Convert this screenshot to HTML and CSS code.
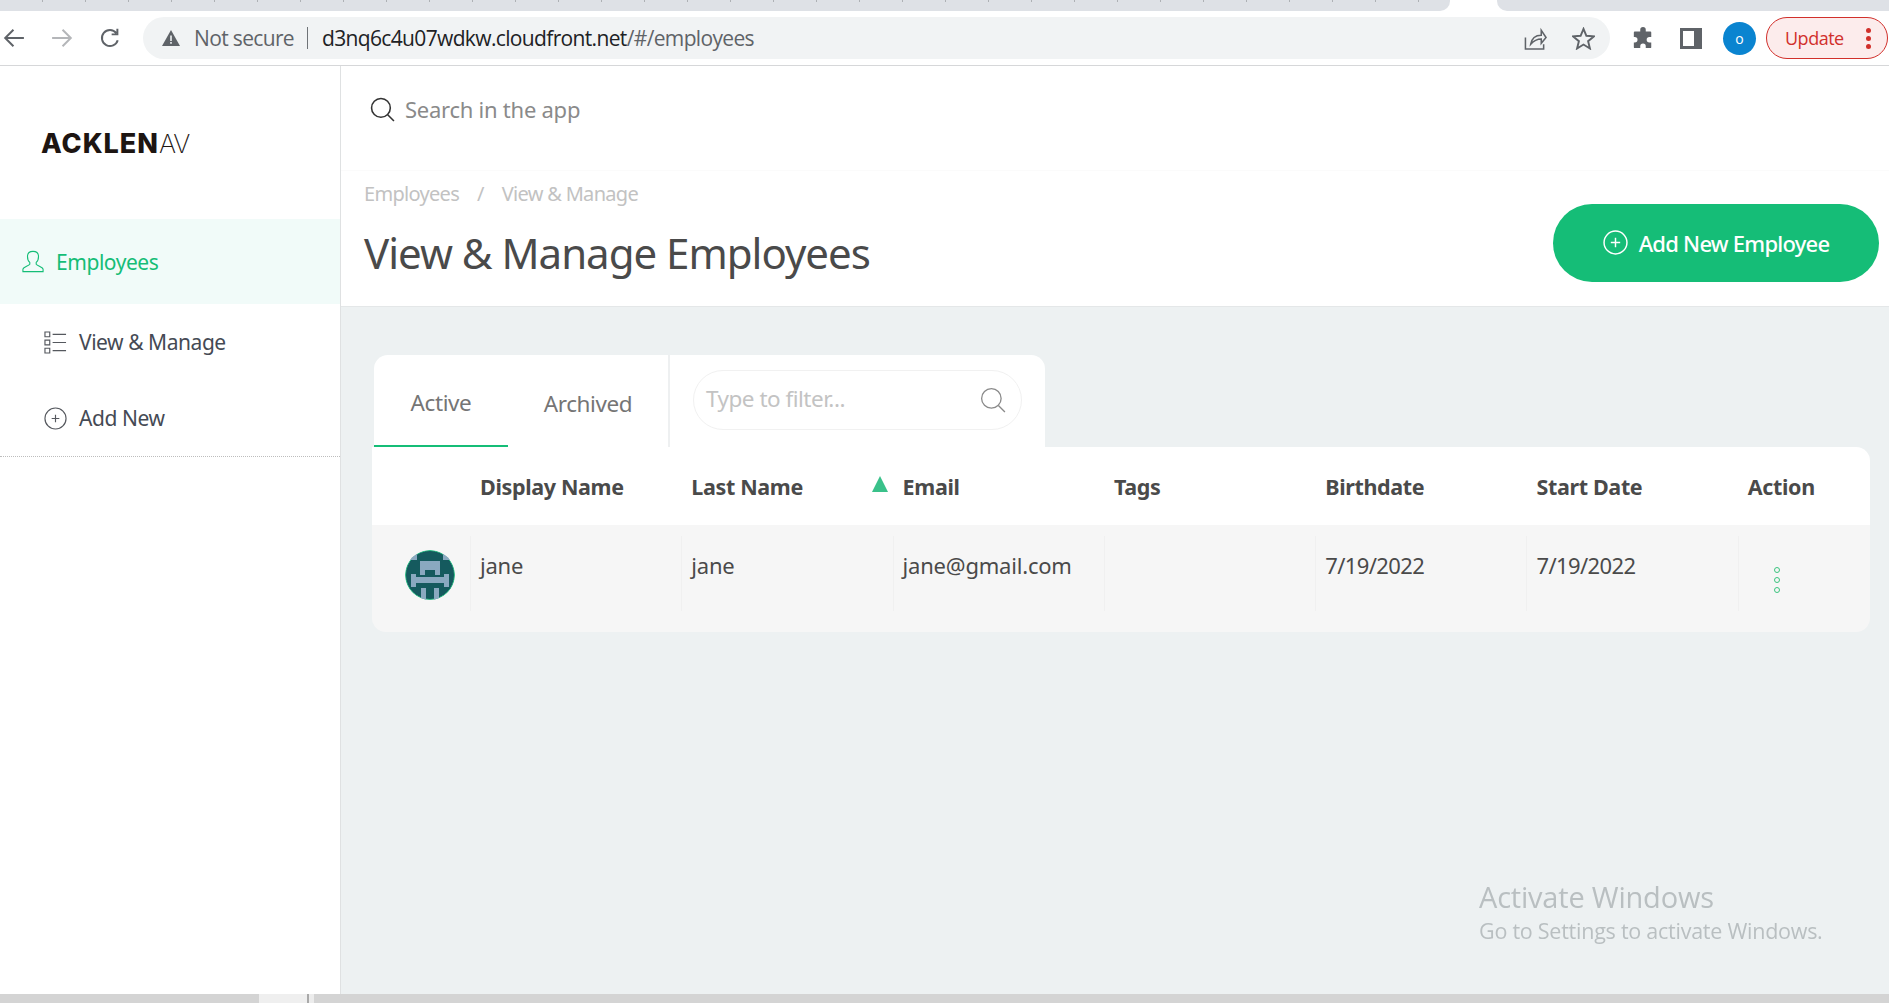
FILE: index.html
```html
<!DOCTYPE html>
<html lang="en">
<head>
<meta charset="utf-8">
<title>Employees</title>
<link rel="stylesheet" href="styles.css">
</head>
<body>
<div class="browser">
  <div class="tabstrip"><div class="strip-left"></div><div class="strip-gap"></div><div class="strip-right"></div></div>
  <div class="toolbar">
    <svg class="nav-icon back" viewBox="0 0 20 20"><path d="M19 10H2M9.500 2.500L2 10l7.500 7.500"/></svg>
    <svg class="nav-icon fwd" viewBox="0 0 20 20"><path d="M1 10h17M10.500 2.500L18 10l-7.500 7.500"/></svg>
    <svg class="nav-icon reload" viewBox="0 0 20 20"><path d="M17 12a7.300 7.300 0 1 1-1.300-6.500M16.700 1.500v5.200h-5.200"/></svg>
    <div class="omnibox">
      <svg class="warn" viewBox="0 0 18 16"><path d="M9 0l9 16H0z"/><path class="warn-mark" d="M8.200 5.500h1.600v5.500H8.200zM8.200 12h1.600v1.700H8.200z"/></svg>
      <span class="not-secure">Not secure</span>
      <span class="omni-sep"></span>
      <span class="url">d3nq6c4u07wdkw.cloudfront.net<span class="url-path">/#/employees</span></span>
      <svg class="omni-icon share" viewBox="0 0 24 24"><path d="M1.500 11v12h19v-5M7 18c1-6 5-9.500 11-9.500V3.500l5 7.500-5 6v-4.500c-5 0-8 2-11 5.500z"/></svg>
      <svg class="omni-icon star" viewBox="0 0 24 24"><path d="M12 2l3 7.200 7.800.6-6 5 1.900 7.600L12 18.300l-6.700 4.100 1.900-7.600-6-5L9 9.200z"/></svg>
    </div>
    <svg class="puzzle" viewBox="0 0 24 24"><path d="M9 3a3 3 0 0 1 6 0v2h5a1 1 0 0 1 1 1v5h-2a3 3 0 0 0 0 6h2v5a1 1 0 0 1-1 1h-5v-2a3 3 0 0 0-6 0v2H3a1 1 0 0 1-1-1v-5h1a3 3 0 0 0 0-6H2V6a1 1 0 0 1 1-1h6z"/></svg>
    <div class="panel-icon"><span></span></div>
    <div class="profile">o</div>
    <div class="update"><span>Update</span><i class="update-dots"><b></b><b></b><b></b></i></div>
  </div>
</div>

<div class="app">
  <aside class="sidebar">
    <div class="logo"><span class="logo-bold">ACKLEN</span><span class="logo-thin">AV</span></div>
    <div class="nav-active">
      <svg class="nav-user" viewBox="0 0 24 24"><path d="M1 23v-2.500c0-2.500 6-3.500 7.500-5.500v-2C6.500 11.500 6 8.500 6 6.500 6 3 8.500 1 12 1s6 2 6 5.500c0 2-.5 5-2.500 6.500v2c1.500 2 7.500 3 7.500 5.500V23z"/></svg>
      <span>Employees</span>
    </div>
    <div class="nav-item">
      <svg class="nav-svg" viewBox="0 0 24 24"><path d="M1 1h5v5H1zM1 9.500h5v5H1zM1 18h5v5H1zM9 3.500h14M9 12h14M9 20.500h14"/></svg>
      <span>View &amp; Manage</span>
    </div>
    <div class="nav-item">
      <svg class="nav-svg" viewBox="0 0 24 24"><circle cx="12" cy="12" r="11"/><path d="M12 8v8M8 12h8"/></svg>
      <span>Add New</span>
    </div>
    <div class="nav-rule"></div>
  </aside>

  <main class="main">
    <div class="searchbar">
      <svg class="search-icon" viewBox="0 0 24 24"><circle cx="10.500" cy="10.500" r="9"/><path d="M17 17l6 6"/></svg>
      <span class="search-text">Search in the app</span>
    </div>
    <header class="page-head">
      <div class="head-text">
        <div class="crumbs"><span>Employees</span><span class="crumb-sep">/</span><span>View &amp; Manage</span></div>
        <h1>View &amp; Manage Employees</h1>
      </div>
      <button class="add-btn">
        <svg viewBox="0 0 24 24"><circle cx="12" cy="12" r="11"/><path d="M12 7.500v9M7.500 12h9"/></svg>
        <span>Add New Employee</span>
      </button>
    </header>

    <section class="content">
      <div class="tabs-card">
        <div class="tabs">
          <div class="tab tab-active">Active</div>
          <div class="tab tab-archived">Archived</div>
        </div>
        <div class="filter-wrap">
          <div class="filter">
            <span class="filter-text">Type to filter...</span>
            <svg viewBox="0 0 24 24"><circle cx="10.500" cy="10.500" r="9"/><path d="M17 17l6 6"/></svg>
          </div>
        </div>
      </div>
      <div class="table">
        <div class="thead">
          <div class="cell"></div>
          <div class="cell">Display Name</div>
          <div class="cell">Last Name</div>
          <div class="cell email-head"><svg class="sort" viewBox="0 0 16 16"><path d="M8 0l8 16H0z"/></svg>Email</div>
          <div class="cell">Tags</div>
          <div class="cell">Birthdate</div>
          <div class="cell">Start Date</div>
          <div class="cell">Action</div>
        </div>
        <div class="trow">
          <div class="tcell avatar-cell">
            <svg class="avatar" viewBox="0 0 50 50">
              <circle cx="25" cy="25" r="24.500"/>
              <path class="av-shape" d="M4 4h8v6H4zM38 4h8v6h-8zM15 11h20v14h-5v-5H20v5h-5zM6 24h5v3h28v-3h5v13h-5v-4H11v4H6zM16 38h5v12h-5zM29 38h5v12h-5z"/>
            </svg>
          </div>
          <div class="tcell">jane</div>
          <div class="tcell">jane</div>
          <div class="tcell">jane@gmail.com</div>
          <div class="tcell"></div>
          <div class="tcell tcell-date">7/19/2022</div>
          <div class="tcell tcell-date">7/19/2022</div>
          <div class="tcell kebab-cell"><i class="kebab"><b></b><b></b><b></b></i></div>
        </div>
      </div>
    </section>
  </main>
</div>

<div class="scrollbar"><div class="sb-a"></div><div class="sb-thumb"></div><div class="sb-mark"></div><div class="sb-b"></div><div class="sb-c"></div></div>

<div class="watermark">
  <div class="wm-title">Activate Windows</div>
  <div class="wm-sub">Go to Settings to activate Windows.</div>
</div>
</body>
</html>
```
FILE: styles.css
```css
* { box-sizing: border-box; }
html, body { margin: 0; padding: 0; height: 100%; overflow: hidden; }
body {
  display: flex;
  flex-direction: column;
  height: 1003px;
  background: #fff;
  font-family: "Noto Sans", "Open Sans", sans-serif;
  color: #4a4a4a;
}

/* browser chrome */
.browser { flex: none; height: 66px; border-bottom: 1px solid #d6d7d9; font-family: "Open Sans", "Noto Sans", sans-serif; }
.tabstrip { display: flex; height: 11px; }
.strip-left {
  width: 1450px;
  background: repeating-linear-gradient(90deg, #dee1e6 0 42px, #aeb1b5 42px 43px);
  background-size: 100% 2px;
  background-repeat: no-repeat;
  background-color: #dee1e6;
  border-bottom-right-radius: 10px;
}
.strip-gap { width: 47px; }
.strip-right { flex: 1; background: #dee1e6; border-bottom-left-radius: 10px; }
.toolbar { display: flex; align-items: center; height: 54px; }
.nav-icon { width: 22px; height: 22px; fill: none; stroke-width: 1.8; flex: none; }
.back { margin-left: 3px; stroke: #5f6368; }
.fwd { margin-left: 26px; stroke: #b4b6b9; }
.reload { margin-left: 26px; stroke: #5f6368; }
.omnibox {
  display: flex; align-items: center;
  width: 1467px; height: 42px; margin-left: 22px;
  padding-left: 19px;
  background: #f1f3f4; border-radius: 21px;
  font-size: 21px; letter-spacing: -.65px;
  color: #202124;
}
.warn { width: 18px; height: 16px; fill: #5f6368; flex: none; }
.warn-mark { fill: #f1f3f4; }
.not-secure { margin-left: 14px; color: #5f6368; width: 100px; white-space: nowrap; }
.omni-sep { width: 1px; height: 22px; background: #6f7377; margin-left: 13px; }
.url { margin-left: 14px; white-space: nowrap; width: 770px; }
.url-path { color: #5f6368; }
.omni-icon { width: 23px; height: 23px; fill: none; stroke: #5f6368; stroke-width: 1.6; flex: none; }
.share { margin-left: 432px; }
.star { margin-left: 25px; stroke-width: 2; }
.puzzle { width: 22px; height: 22px; fill: #5f6368; margin-left: 22px; flex: none; }
.panel-icon { width: 22px; height: 21px; margin-left: 26px; background: #5f6368; padding: 3px 8px 3px 3px; flex: none; }
.panel-icon span { display: block; height: 100%; background: #fff; }
.profile {
  width: 33px; height: 33px; margin-left: 21px; border-radius: 50%;
  background: #0a84d0; color: #fff; font-size: 14px; font-weight: 400;
  display: flex; align-items: center; justify-content: center; flex: none;
}
.update {
  display: flex; align-items: center;
  width: 122px; height: 42px; margin-left: 10px; padding-left: 18px;
  background: #fcecec; border: 1.5px solid #d1302b; border-radius: 21px;
  color: #d1302b; font-size: 18px; letter-spacing: -.5px; flex: none;
}
.update-dots { display: flex; flex-direction: column; gap: 3px; margin-left: 22px; }
.update-dots b { width: 5px; height: 5px; border-radius: 50%; background: #d1302b; }

/* app */
.app { flex: 1; display: flex; min-height: 0; }
.sidebar { width: 341px; flex: none; border-right: 1px solid #dfe1e2; background: #fff; }
.logo { width: 220px; height: 153px; padding: 63px 0 0 41px; white-space: nowrap; font-family: "Inter", sans-serif; font-size: 27px; line-height: 30px; color: #1d1512; }
.logo-bold { font-weight: 800; letter-spacing: 1px; }
.logo-thin { font-weight: 200; font-size: 26px; letter-spacing: -1px; }
.nav-active {
  display: flex; align-items: center; height: 85px;
  padding-left: 22px; background: #f1fbf9;
  color: #15bd77; font-size: 21px; letter-spacing: -.45px;
}
.nav-user { width: 22px; height: 23px; fill: none; stroke: #15bd77; stroke-width: 1.2; margin-right: 12px; flex: none; }
.nav-item { display: flex; align-items: center; height: 76px; padding-left: 44px; font-size: 21px; letter-spacing: -.45px; color: #454a54; }
.nav-svg { width: 23px; height: 23px; fill: none; stroke: #55585e; stroke-width: 1.2; margin-right: 12px; flex: none; }
.nav-rule { border-top: 1px dotted #bdbdbd; }

.main { flex: 1; min-width: 0; display: flex; flex-direction: column; background: #edf1f2; }
.searchbar {
  display: flex; align-items: center; flex: none; height: 104px;
  padding: 0 0 17px 29px; background: #fff; color: #8a8a8a;
  font-size: 22px; letter-spacing: -.25px;
}
.search-text { margin-bottom: 2px; }
.search-icon { width: 25px; height: 25px; fill: none; stroke: #333; stroke-width: 1.5; margin-right: 10px; }
.page-head {
  display: flex; justify-content: space-between; flex: none;
  height: 137px; padding: 0 10px 0 23px; background: #fff;
  border-bottom: 1px solid #e4e7e8;
  border-top: 1px solid #fbfbfb;
}
.crumbs { display: flex; margin-top: 10px; font-size: 20px; letter-spacing: -.7px; color: #c2c2c2; line-height: 26px; }
.crumb-sep { margin: 0 18px 0 18px; }
h1 { margin: 16px 0 0; font-size: 42px; font-weight: 400; line-height: 60px; letter-spacing: -1px; color: #4a4a4a; white-space: nowrap; }
.add-btn {
  display: flex; align-items: center; justify-content: center; gap: 11px;
  width: 326px; height: 78px; margin-top: 33px; padding-bottom: 2px;
  border: 0; border-radius: 39px; background: #15bd77; color: #fff;
  font-family: inherit; font-size: 22px; font-weight: 500; letter-spacing: -.75px;
}
.add-btn svg { width: 25px; height: 25px; fill: none; stroke: #fff; stroke-width: 1.400; }

.content { padding: 48px 19px 0 31px; }
.tabs-card { display: flex; height: 92px; margin-left: 2px; width: 671px; }
.tabs { display: flex; width: 294px; padding-top: 2px; background: #fff; border-top-left-radius: 14px; }
.tab { height: 90px; padding-top: 2px; display: flex; align-items: center; justify-content: center; font-size: 22.500px; letter-spacing: -.4px; color: #757575; }
.tab-active { width: 134px; border-bottom: 2px solid #15bd77; }
.tab-archived { width: 160px; }
.filter-wrap { flex: 1; background: #fff; border-left: 2px solid #eef0f1; border-radius: 0 14px 0 0; padding: 15px 0 0 23px; }
.filter {
  display: flex; align-items: center; justify-content: space-between;
  width: 329px; height: 60px; padding: 0 15px 0 12px;
  border: 1px solid #f1f1f1; border-radius: 30px;
  font-size: 22.500px; letter-spacing: -.5px; color: #c3c3c3;
}
.filter-text { margin-bottom: 4px; }
.filter svg { width: 26px; height: 26px; fill: none; stroke: #8a8a8a; stroke-width: 1.2; }

.table { border-radius: 0 14px 14px 14px; overflow: hidden; }
.thead, .trow { display: grid; grid-template-columns: 98px repeat(7, 211.300px); }
.thead { height: 78px; background: #fff; align-items: center; font-weight: 700; font-size: 21.500px; letter-spacing: -.35px; color: #4a4a4a; }
.thead .cell { padding-left: 10px; white-space: nowrap; }
.email-head { position: relative; }
.sort { position: absolute; left: -21px; top: 4px; width: 16px; height: 16px; fill: #3ac18a; }
.trow { height: 107px; background: #f6f6f6; padding: 11px 0 21px; font-size: 22px; letter-spacing: -.2px; color: #4a4a4a; }
.tcell { padding: 14px 0 0 9px; border-left: 1px solid #f0f0f0; white-space: nowrap; }
.tcell-date { letter-spacing: -.6px; }
.avatar-cell { border: 0; padding: 14px 0 0 33px; }
.avatar { display: block; width: 50px; height: 50px; clip-path: circle(50%); }
.avatar circle { fill: #155a5e; stroke: #2cc086; stroke-width: 1; }
.av-shape { fill: #8aa9c0; }
.kebab-cell { padding: 0; }
.kebab { display: flex; flex-direction: column; gap: 4px; margin: 31px 0 0 35px; }
.kebab b { width: 6px; height: 6px; border: 1.400px solid #3cc47f; border-radius: 50%; }

.scrollbar { flex: none; height: 9px; display: flex; background: #d4d4d4; }
.sb-a { width: 259px; }
.sb-thumb { width: 48px; background: #efefef; }
.sb-mark { width: 2px; background: #a9a9a9; }
.sb-b { width: 5px; background: #ececec; }
.sb-c { flex: 1; }

.watermark { position: fixed; left: 1479px; top: 878px; color: #b9bfc1; font-family: "Open Sans", sans-serif; white-space: nowrap; }
.wm-title { font-size: 29px; line-height: 38px; letter-spacing: -.2px; }
.wm-sub { font-size: 21.500px; line-height: 30px; letter-spacing: -.25px; }
```
